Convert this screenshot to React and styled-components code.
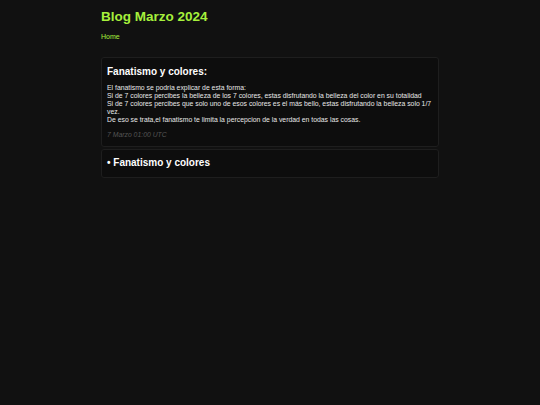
import React from 'react';
import styled, { createGlobalStyle } from 'styled-components';

const GlobalStyle = createGlobalStyle`
  html, body {
    margin: 0;
    padding: 0;
    background-color: #111111;
  }
  body {
    font-family: "Liberation Sans", Arial, sans-serif;
    color: #e6e6e6;
  }
`;

const Page = styled.div`
  width: 338px;
  margin: 0 auto;
  padding-top: 8px;
`;

const Header = styled.header`
  margin-bottom: 16px;
`;

const SiteTitle = styled.h1`
  margin: 0;
  font-size: 13.5px;
  line-height: 17px;
  font-weight: bold;
  color: #a6f03c;
`;

const Nav = styled.nav`
  margin-top: 8px;
  font-size: 7px;
  line-height: 8px;
`;

const NavLink = styled.a`
  color: #a6f03c;
  text-decoration: none;
`;

const Post = styled.article`
  background-color: #0d0d0d;
  border: 1px solid #1e1e1e;
  border-radius: 3px;
  padding: ${({ compact }) => (compact ? '6px 4px 7px 5px' : '7px 4px 7px 5px')};
  margin-bottom: 2px;
`;

const PostTitle = styled.h2`
  margin: 0;
  font-size: 10px;
  line-height: 14px;
  font-weight: bold;
  color: #ffffff;
`;

const PostBody = styled.p`
  margin: 5px 0 0;
  font-size: 6.85px;
  line-height: 8px;
  color: #e8e8e8;
`;

const PostDate = styled.div`
  margin-top: 7px;
  font-size: 6.85px;
  line-height: 8px;
  font-style: italic;
  color: #555555;
`;

const lines = [
  'El fanatismo se podria explicar de esta forma:',
  'Si de 7 colores percibes la belleza de los 7 colores, estas disfrutando la belleza del color en su totalidad',
  'Si de 7 colores percibes que solo uno de esos colores es el más bello, estas disfrutando la belleza solo 1/7 vez.',
  'De eso se trata,el fanatismo te limita la percepcion de la verdad en todas las cosas.',
];

export default function App() {
  return (
    <>
      <GlobalStyle />
      <Page>
        <Header>
          <SiteTitle>Blog Marzo 2024</SiteTitle>
          <Nav>
            <NavLink href="#">Home</NavLink>
          </Nav>
        </Header>
        <Post>
          <PostTitle>Fanatismo y colores:</PostTitle>
          <PostBody>
            {lines.map((l, i) => (
              <React.Fragment key={i}>
                {l}
                {i < lines.length - 1 && <br />}
              </React.Fragment>
            ))}
          </PostBody>
          <PostDate>7 Marzo 01:00 UTC</PostDate>
        </Post>
        <Post compact>
          <PostTitle>• Fanatismo y colores</PostTitle>
        </Post>
      </Page>
    </>
  );
}
